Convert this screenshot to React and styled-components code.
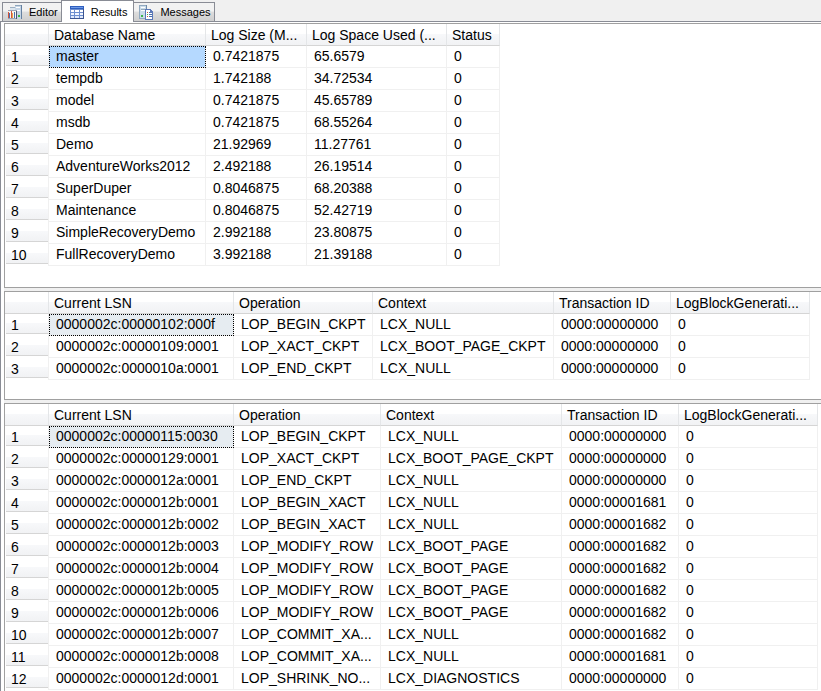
import React, { useState } from 'react';
import styled, { createGlobalStyle } from 'styled-components';

const logSpace = {
  columns: [
    { name: 'Database Name', width: 157 },
    { name: 'Log Size (M...', width: 101 },
    { name: 'Log Space Used (...', width: 140 },
    { name: 'Status', width: 53 },
  ],
  rows: [
    ['master', '0.7421875', '65.6579', '0'],
    ['tempdb', '1.742188', '34.72534', '0'],
    ['model', '0.7421875', '45.65789', '0'],
    ['msdb', '0.7421875', '68.55264', '0'],
    ['Demo', '21.92969', '11.27761', '0'],
    ['AdventureWorks2012', '2.492188', '26.19514', '0'],
    ['SuperDuper', '0.8046875', '68.20388', '0'],
    ['Maintenance', '0.8046875', '52.42719', '0'],
    ['SimpleRecoveryDemo', '2.992188', '23.80875', '0'],
    ['FullRecoveryDemo', '3.992188', '21.39188', '0'],
  ],
};

const logColumns = (operationWidth) => [
  { name: 'Current LSN', width: 185 },
  { name: 'Operation', width: operationWidth },
  { name: 'Context', width: 181 },
  { name: 'Transaction ID', width: 117 },
  { name: 'LogBlockGenerati...', width: 139 },
];

const simpleLog = {
  columns: logColumns(139),
  rows: [
    ['0000002c:00000102:000f', 'LOP_BEGIN_CKPT', 'LCX_NULL', '0000:00000000', '0'],
    ['0000002c:00000109:0001', 'LOP_XACT_CKPT', 'LCX_BOOT_PAGE_CKPT', '0000:00000000', '0'],
    ['0000002c:0000010a:0001', 'LOP_END_CKPT', 'LCX_NULL', '0000:00000000', '0'],
  ],
};

const fullLog = {
  columns: logColumns(147),
  rows: [
    ['0000002c:00000115:0030', 'LOP_BEGIN_CKPT', 'LCX_NULL', '0000:00000000', '0'],
    ['0000002c:00000129:0001', 'LOP_XACT_CKPT', 'LCX_BOOT_PAGE_CKPT', '0000:00000000', '0'],
    ['0000002c:0000012a:0001', 'LOP_END_CKPT', 'LCX_NULL', '0000:00000000', '0'],
    ['0000002c:0000012b:0001', 'LOP_BEGIN_XACT', 'LCX_NULL', '0000:00001681', '0'],
    ['0000002c:0000012b:0002', 'LOP_BEGIN_XACT', 'LCX_NULL', '0000:00001682', '0'],
    ['0000002c:0000012b:0003', 'LOP_MODIFY_ROW', 'LCX_BOOT_PAGE', '0000:00001682', '0'],
    ['0000002c:0000012b:0004', 'LOP_MODIFY_ROW', 'LCX_BOOT_PAGE', '0000:00001682', '0'],
    ['0000002c:0000012b:0005', 'LOP_MODIFY_ROW', 'LCX_BOOT_PAGE', '0000:00001682', '0'],
    ['0000002c:0000012b:0006', 'LOP_MODIFY_ROW', 'LCX_BOOT_PAGE', '0000:00001682', '0'],
    ['0000002c:0000012b:0007', 'LOP_COMMIT_XA...', 'LCX_NULL', '0000:00001682', '0'],
    ['0000002c:0000012b:0008', 'LOP_COMMIT_XA...', 'LCX_NULL', '0000:00001681', '0'],
    ['0000002c:0000012d:0001', 'LOP_SHRINK_NO...', 'LCX_DIAGNOSTICS', '0000:00000000', '0'],
  ],
};

const EditorIcon = () => (
  <svg width="16" height="16" viewBox="0 0 16 16" shapeRendering="crispEdges" aria-hidden="true">
    <path d="M8 1h6v14H8z" fill="#c6d6e6" />
    <path d="M8 1h6v1H8z" fill="#8fa6bd" />
    <path d="M14 1h1v14h-1z" fill="#6580a0" />
    <path d="M9 3h4v1H9zM9 6h4v1H9z" fill="#fff" />
    <path d="M11 11h2v2h-2z" fill="#3db54a" />
    <path d="M3 3h5v3H3z" fill="#dce6ee" />
    <path d="M3 3h5v1H3z" fill="#9db0c2" />
    <path d="M1 6h9v9H1z" fill="#f7f4ee" />
    <path d="M1 6h9v1H1zM1 14h9v1H1z" fill="#9aa3b5" />
    <path d="M1 8h1v6H1zM4 7h1v7H4z" fill="#d4553a" />
    <path d="M2 9h1v5H2zM7 8h1v6H7z" fill="#4c6fae" />
    <path d="M5 9h1v5H5z" fill="#e5a04c" />
    <path d="M9 7h1v8H9z" fill="#4a5875" />
  </svg>
);

const ResultsIcon = () => (
  <svg width="16" height="16" viewBox="0 0 16 16" shapeRendering="crispEdges" aria-hidden="true">
    <path d="M1 2h14v13H1z" fill="#6d8fd0" />
    <path d="M1 2h14v3H1z" fill="#2f5fbf" />
    <path d="M2 3h12v1H2z" fill="#6f9be8" />
    <path d="M14 5h1v10h-1zM1 14h14v1H1z" fill="#3c5590" />
    <path d="M2 6h3v2H2zM6 6h4v2H6zM11 6h3v2h-3z" fill="#fff" />
    <path d="M2 9h3v2H2zM6 9h4v2H6zM11 9h3v2h-3z" fill="#f2f6ff" />
    <path d="M2 12h3v2H2zM6 12h4v2H6zM11 12h3v2h-3z" fill="#dfe9fb" />
  </svg>
);

const MessagesIcon = () => (
  <svg width="16" height="16" viewBox="0 0 16 16" shapeRendering="crispEdges" aria-hidden="true">
    <path d="M1 1h7v14H1z" fill="#cbdcea" />
    <path d="M1 1h7v1H1zM1 1h1v14H1zM1 14h7v1H1z" fill="#91a9bf" />
    <path d="M8 1h1v14H8z" fill="#6f8ba8" />
    <path d="M3 3h4v1H3zM3 6h4v1H3z" fill="#fff" />
    <path d="M3 5h4v1H3z" fill="#94aabd" />
    <path d="M3 11h2v2H3z" fill="#3db54a" />
    <path d="M7 5h5l3 3v8H7z" fill="#5b78b8" />
    <path d="M8 6h4v3h2v6H8z" fill="#fff" />
    <path d="M9 8h1v1H9zM9 12h1v1H9z" fill="#d4553a" />
    <path d="M9 10h1v1H9z" fill="#3db54a" />
    <path d="M11 8h1v1h-1zM11 10h3v1h-3zM11 12h3v1h-3z" fill="#4c6fae" />
  </svg>
);

const tabs = [
  { name: 'Editor', Icon: EditorIcon },
  { name: 'Results', Icon: ResultsIcon },
  { name: 'Messages', Icon: MessagesIcon },
];

const ResultGrid = ({ label, data, focused }) => (
  <Pane>
    <Grid aria-label={label}>
      <colgroup>
        <Col $width={44} />
        {data.columns.map((column) => (
          <Col key={column.name} $width={column.width} />
        ))}
      </colgroup>
      <thead>
        <tr>
          <Corner />
          {data.columns.map((column) => (
            <ColumnHeader key={column.name} scope="col">
              {column.name}
            </ColumnHeader>
          ))}
        </tr>
      </thead>
      <tbody>
        {data.rows.map((row, rowIndex) => (
          <tr key={row[0]}>
            <RowHeader scope="row">
              <RowNumber>{rowIndex + 1}</RowNumber>
            </RowHeader>
            {row.map((value, index) => (
              <Cell key={index} $current={rowIndex === 0 && index === 0} $focused={focused}>
                {value}
              </Cell>
            ))}
          </tr>
        ))}
      </tbody>
    </Grid>
  </Pane>
);

const App = () => {
  const [active, setActive] = useState('Results');

  return (
    <>
      <GlobalStyle />
      <TabBar role="tablist">
        {tabs.map(({ name, Icon }) => (
          <Tab
            key={name}
            type="button"
            role="tab"
            aria-selected={active === name}
            $active={active === name}
            onClick={() => setActive(name)}
          >
            <Icon />
            {name}
          </Tab>
        ))}
      </TabBar>
      <Results>
        <Panes>
          <ResultGrid label="Log space" data={logSpace} focused />
          <ResultGrid label="Simple recovery log" data={simpleLog} />
          <ResultGrid label="Full recovery log" data={fullLog} />
        </Panes>
      </Results>
    </>
  );
};

export default App;

const GlobalStyle = createGlobalStyle`
  * {
    box-sizing: border-box;
  }

  body {
    margin: 0;
    overflow: hidden;
    background: #f0f0f0;
    color: #000;
    font-family: 'Liberation Sans', Arial, sans-serif;
    font-size: 14px;
  }
`;

const TabBar = styled.div`
  display: flex;
  align-items: flex-end;
  height: 21px;
  padding-left: 2px;
`;

const Tab = styled.button`
  display: flex;
  align-items: center;
  gap: 6px;
  height: ${({ $active }) => ($active ? 22 : 19)}px;
  margin: 0 ${({ $active }) => ($active ? -1 : 0)}px;
  margin-bottom: ${({ $active }) => ($active ? -1 : 0)}px;
  padding: ${({ $active }) => ($active ? '0 6px 0 7px' : '0 3px 0 4px')};
  border: 1px solid #898c95;
  border-bottom: 0;
  background: ${({ $active }) => ($active ? '#fff' : 'linear-gradient(#f2f2f2 45%, #dddddd 50%, #cfcfcf)')};
  color: #000;
  font-family: 'Liberation Sans', Arial, sans-serif;
  font-size: 11px;
  z-index: ${({ $active }) => ($active ? 1 : 0)};
`;

const Results = styled.main`
  padding: 1px 0 0 3px;
  border-top: 1px solid #898c95;
  border-left: 1px solid #898c95;
  background: #fff;
`;

const Panes = styled.div`
  display: flex;
  flex-direction: column;
  gap: 3px;
  background: #f0f0f0;
`;

const Pane = styled.section`
  padding-bottom: 19px;
  border: 1px solid #a0a0a0;
  border-right: 0;
  background: #fff;

  &:first-child {
    padding-bottom: 21px;
  }
`;

const Grid = styled.table`
  width: min-content;
  table-layout: fixed;
  border-collapse: separate;
  border-spacing: 0;
`;

const Col = styled.col`
  width: ${({ $width }) => $width}px;
`;

const Corner = styled.td`
  height: 22px;
  padding: 0;
  border-right: 1px solid #e4e6e8;
  border-bottom: 1px solid #d5d5d5;
  background: linear-gradient(#fff 45%, #f7f8fa 50%, #f1f2f4);
`;

const ColumnHeader = styled.th`
  height: 22px;
  padding: 0 0 0 5px;
  border-right: 1px solid #e4e6e8;
  border-bottom: 1px solid #d5d5d5;
  background: linear-gradient(#fff 45%, #f7f8fa 50%, #f1f2f4);
  font-weight: normal;
  line-height: 20px;
  text-align: left;
  white-space: nowrap;
`;

const RowHeader = styled.th`
  height: 22px;
  padding: 0 0 2px 1px;
  border-right: 1px solid #f0f0f0;
  font-weight: normal;
  text-align: left;
`;

const RowNumber = styled.div`
  height: 20px;
  padding: 1px 0 0 5px;
  border-bottom: 1px solid #d5d5d5;
  background: linear-gradient(#fff 45%, #f7f8fa 50%, #f1f2f4);
  line-height: 20px;
`;

const Cell = styled.td`
  height: 22px;
  padding: 0 0 1px 7px;
  border-right: 1px solid #f0f0f0;
  border-bottom: 1px solid #f0f0f0;
  background: ${({ $current, $focused }) => ($current ? ($focused ? '#b5d9ff' : '#e6ecf1') : '#fff')};
  outline: ${({ $current }) => ($current ? '1px dotted #000' : 'none')};
  outline-offset: -1px;
  line-height: 18px;
  white-space: nowrap;
`;
